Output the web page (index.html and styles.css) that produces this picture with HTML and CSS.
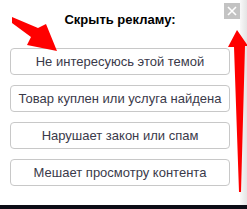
FILE: index.html
```html
<!DOCTYPE html>
<html lang="ru">
<head>
  <meta charset="UTF-8">
  <title>Скрыть рекламу</title>
  <link rel="stylesheet" href="styles.css">
</head>
<body>
  <div class="screen">
    <div class="popup">
      <div class="popup-title">Скрыть рекламу:</div>
      <div class="reasons">
        <div class="reason">Не интересуюсь этой темой</div>
        <div class="reason">Товар куплен или услуга найдена</div>
        <div class="reason">Нарушает закон или спам</div>
        <div class="reason">Мешает просмотру контента</div>
      </div>
      <div class="close-btn">
        <svg width="10" height="10" viewBox="0 0 10 10">
          <path d="M1 1 L9 9 M9 1 L1 9" stroke="#fff" stroke-width="1.6"/>
        </svg>
      </div>
    </div>
    <div class="side"></div>
  </div>
  <div class="under"></div>

  <!-- red pointer arrows drawn over the screenshot -->
  <svg class="arrows" width="247" height="209" viewBox="0 0 247 209">
    <polygon points="12,17 38,28 46,24 57,51 27,45 31,37 12,23" fill="#ff0000"/>
    <polygon points="237,30 248,46 245,46 241,192 239,192 234,47 228,47" fill="#ff0000"/>
  </svg>
</body>
</html>
```

FILE: styles.css
```css
body {
  margin: 0;
  background: #fff;
  font-family: "Liberation Sans", Arial, sans-serif;
}
.screen {
  display: flex;
  width: 247px;
  height: 205px;
}
.popup {
  position: relative;
  width: 240px;
  background: #fff;
}
.side {
  flex: 1;
  background: linear-gradient(to right, #f8f8f8, #e4e4e4);
}
.popup-title {
  padding-top: 12px;
  text-align: center;
  font-size: 13px;
  font-weight: bold;
  line-height: 16px;
  color: #000;
}
.reasons {
  display: flex;
  flex-direction: column;
  gap: 10px;
  margin-top: 20px;
  padding-left: 10px;
}
.reason {
  display: flex;
  align-items: center;
  justify-content: center;
  box-sizing: border-box;
  width: 220px;
  height: 27px;
  border: 1px solid #c8c8c8;
  border-radius: 4px;
  font-size: 13px;
  color: #3a3a4a;
}
.close-btn {
  position: absolute;
  top: 3px;
  left: 224px;
  width: 16px;
  height: 16px;
  display: flex;
  align-items: center;
  justify-content: center;
  background: #c3c3c3;
}
.under {
  height: 4px;
  background: #0d0d16;
}
.arrows {
  position: absolute;
  top: 0;
  left: 0;
}
```
